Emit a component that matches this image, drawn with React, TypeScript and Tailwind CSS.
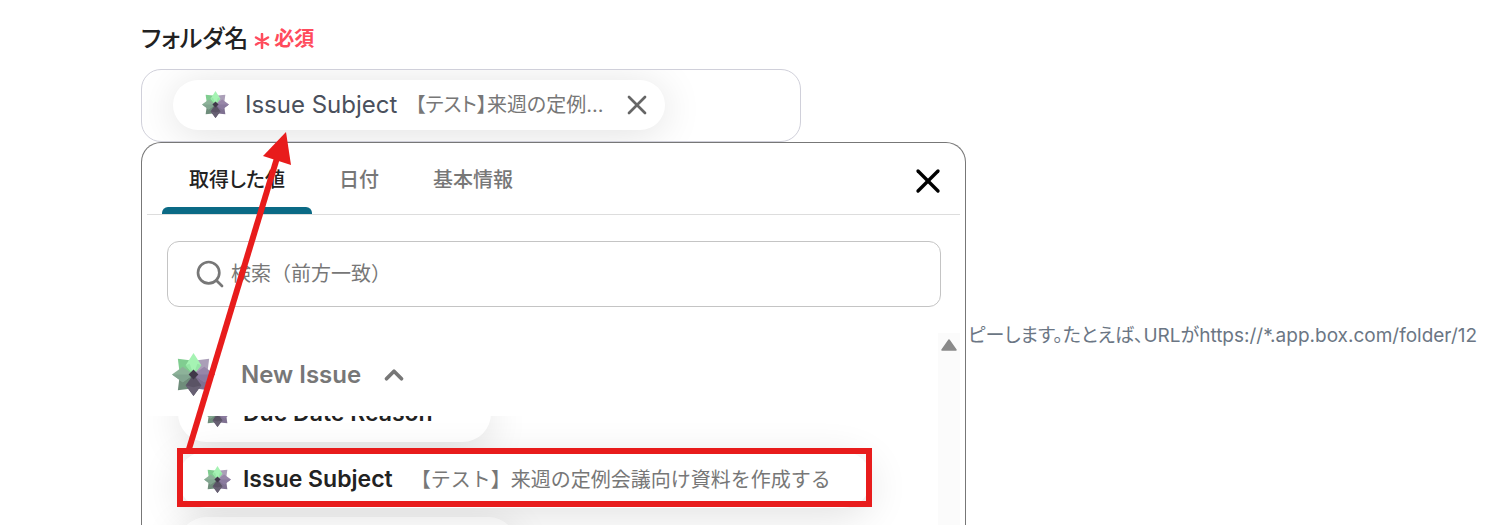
import { useState } from 'react';
import clsx from 'clsx';
import { ChevronUp, Search, X } from 'lucide-react';

const tabs = ['取得した値', '日付', '基本情報'];

const FlowerIcon = ({ className }: { className?: string }) => (
  <svg viewBox="0 0 44 44" className={className} aria-hidden="true">
    <path d="M6 6 L18 7.5 L22 22 L7.5 18Z" fill="#80cd90" />
    <path d="M38 6 L26 7.5 L22 22 L36.5 18Z" fill="#ab9fb8" />
    <path d="M6 38 L7.5 26 L22 22 L18 36.5Z" fill="#6f8d7b" />
    <path d="M38 38 L36.5 26 L22 22 L26 36.5Z" fill="#7f7191" />
    <path d="M0 22 L11 14 L22 22 L11 30Z" fill="#8db299" />
    <path d="M0 22 L22 22 L11 30Z" fill="#82a590" />
    <path d="M44 22 L33 14 L22 22 L33 30Z" fill="#9786a8" />
    <path d="M44 22 L22 22 L33 30Z" fill="#8a7a9e" />
    <path d="M22 0 L30 12.5 L22 22 L14 12.5Z" fill="#a5f3b3" />
    <path d="M14 12.5 L18 11 L22 22Z" fill="#95e6a5" />
    <path d="M30 12.5 L26 11 L22 22Z" fill="#95e6a5" />
    <path d="M22 22 L30 33 L22 44 L14 33Z" fill="#5a5365" />
    <path d="M14 33 L22 35 L30 33 L22 44Z" fill="#676073" />
    <path d="M22 17 L27 22 L22 27 L17 22Z" fill="#403849" />
  </svg>
);

const ListChip = ({ name, value }: { name: string; value?: string }) => (
  <button
    type="button"
    className="flex h-[57px] items-center rounded-full bg-white pr-10 pl-[26px] whitespace-nowrap shadow-[0_8px_40px_rgba(0,0,0,0.12)]"
  >
    <FlowerIcon className="size-[27px] shrink-0" />
    <span className="ml-3 text-[23px] font-semibold text-[#222]">{name}</span>
    <span className="ml-[18px] text-[20px] text-[#777]">{value}</span>
  </button>
);

const SelectedValue = () => (
  <div className="flex h-[73px] max-w-[660px] shrink-0 items-center overflow-hidden rounded-[20px] border border-[#d0d0da] px-[31px] pb-0.5">
    <div className="flex h-[50px] items-center rounded-full bg-white pr-3 pl-[29px] whitespace-nowrap shadow-[0_4px_40px_rgba(0,0,0,0.12)]">
      <FlowerIcon className="size-[27px] shrink-0" />
      <span className="ml-4 text-2xl text-[#4a505c]">Issue Subject</span>
      <span className="ml-[18px] text-[20px] text-[#777] [font-feature-settings:'palt']">【テスト】来週の定例...</span>
      <button type="button" aria-label="削除" className="ml-[18px] text-[#666]">
        <X size={32} strokeWidth={2} />
      </button>
    </div>
  </div>
);

const ValuePicker = () => {
  const [active, setActive] = useState(tabs[0]);
  const [open, setOpen] = useState(true);

  return (
    <div className="flex w-[825px] shrink-0 flex-col overflow-hidden rounded-t-[20px] border border-b-0 border-[#777] bg-white px-[5px]">
      <div className="flex h-[72px] shrink-0 items-center border-b border-[#ddd] pr-3 pl-[15px]">
        <div role="tablist" className="flex h-full [font-feature-settings:'palt']">
          {tabs.map((tab) => (
            <button
              key={tab}
              type="button"
              role="tab"
              aria-selected={tab === active}
              onClick={() => setActive(tab)}
              className={clsx(
                'flex flex-col items-center justify-between pt-[22px] text-[20px] leading-[30px] font-medium',
                tab === active ? 'text-[#222]' : 'text-[#777]'
              )}
            >
              <span className="px-[27px]">{tab}</span>
              {tab === active && <span className="h-[7px] w-full rounded-t-md bg-[#0b6a85]" />}
            </button>
          ))}
        </div>
        <button type="button" aria-label="閉じる" className="mt-1 ml-auto text-black">
          <X size={40} strokeWidth={2} />
        </button>
      </div>

      <label className="mr-[19px] mt-[26px] ml-5 flex h-[66px] shrink-0 items-center gap-[5px] rounded-xl border border-[#c4c4c4] px-[26px] text-[#777]">
        <Search size={32} strokeWidth={2} aria-label="検索" className="shrink-0" />
        <input
          type="text"
          placeholder="検索（前方一致）"
          className="w-full bg-transparent text-[20px] outline-none placeholder:text-[#777]"
        />
      </label>

      <div className="mt-[26px] flex min-h-0 flex-1">
        <div className="min-w-0 flex-1 overflow-hidden">
          <button
            type="button"
            aria-expanded={open}
            onClick={() => setOpen(!open)}
            className="relative z-10 flex h-[83px] w-full items-center bg-white pl-[25px] text-[#777]"
          >
            <FlowerIcon className="size-[43px]" />
            <span className="ml-[26px] text-2xl font-semibold">New Issue</span>
            <ChevronUp size={30} strokeWidth={3} className="ml-[18px]" />
          </button>
          {open && (
            <div className="-mt-[31px] flex flex-col items-start gap-[9px] pl-[31px]">
              <ListChip name="Due Date Reason" />
              <div className="relative">
                <ListChip name="Issue Subject" value="【テスト】来週の定例会議向け資料を作成する" />
                <div className="pointer-events-none absolute -inset-x-px -top-[3px] bottom-px border-6 border-[#e81c1c]" />
              </div>
              <ListChip name="Description Reason" />
            </div>
          )}
        </div>
        <div className="flex w-[22px] justify-center bg-[#fbfbfb] pt-1.5">
          <svg viewBox="0 0 16 12" className="h-3 w-4" aria-hidden="true">
            <path d="M8 1 L15 11 H1Z" fill="#8a8a8a" stroke="#8a8a8a" strokeWidth="1.5" strokeLinejoin="round" />
          </svg>
        </div>
      </div>
    </div>
  );
};

const Arrow = () => (
  <svg
    viewBox="0 0 110 320"
    className="pointer-events-none absolute top-[132px] left-[184px] z-20 h-[320px] w-[110px]"
    aria-hidden="true"
  >
    <path d="M5 317 L93 26" stroke="#e81c1c" strokeWidth="6" />
    <path d="M102 0 L79 24 L107 33Z" fill="#e81c1c" />
  </svg>
);

export default function App() {
  return (
    <main className="relative flex h-screen flex-col overflow-hidden bg-white pl-[141px] font-['Inter','Noto_Sans_CJK_JP',sans-serif]">
      <h2 className="flex h-[69px] shrink-0 items-center pt-2 text-2xl font-medium text-[#222] [font-feature-settings:'palt']">
        フォルダ名
        <svg viewBox="0 0 16 16" className="mt-1 ml-1.5 size-4" aria-hidden="true">
          <path d="M8 1V15M2 4.5L14 11.5M14 4.5L2 11.5" stroke="#ff4b5c" strokeWidth="2.5" strokeLinecap="round" />
        </svg>
        <span className="mt-0.5 ml-1 text-[20px] font-semibold text-[#ff4b5c]">必須</span>
      </h2>
      <SelectedValue />
      <div className="flex min-h-0 flex-1">
        <ValuePicker />
        <p className="mt-[180px] ml-0.5 min-w-0 flex-1 overflow-hidden text-[19px] leading-7 whitespace-nowrap text-[#6b7684] [font-feature-settings:'palt']">
          ピーします。たとえば、URLがhttps://*.app.box.com/folder/12
        </p>
      </div>
      <Arrow />
    </main>
  );
}
